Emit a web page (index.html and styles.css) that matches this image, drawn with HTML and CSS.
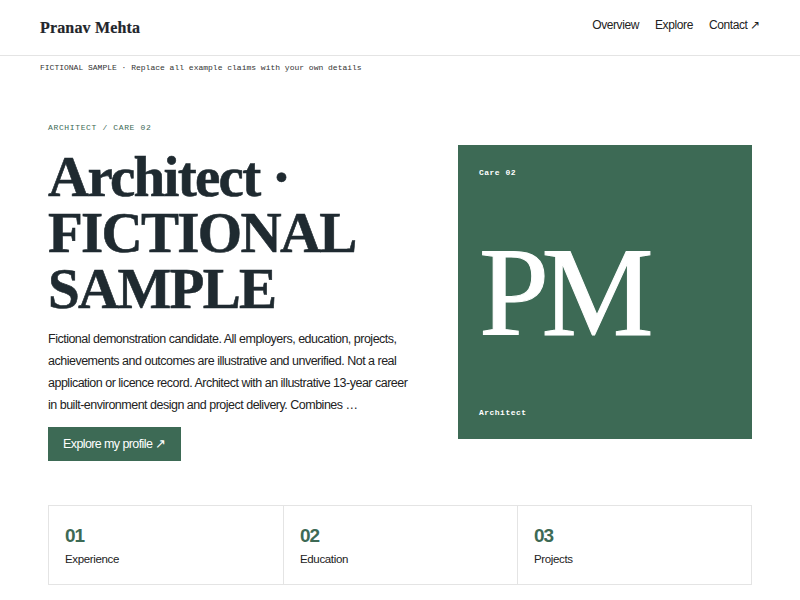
FILE: index.html
```html
<!DOCTYPE html>
<html lang="en">
<head>
<meta charset="utf-8">
<title>Pranav Mehta</title>
<link rel="stylesheet" href="styles.css">
</head>
<body>
<header class="site-header">
  <a class="logo" href="#">Pranav Mehta</a>
  <nav class="nav">
    <a href="#">Overview</a>
    <a href="#">Explore</a>
    <a href="#">Contact ↗</a>
  </nav>
</header>
<div class="notice">FICTIONAL SAMPLE · Replace all example claims with your own details</div>
<main class="container">
  <section class="hero">
    <div class="hero-text">
      <p class="eyebrow">ARCHITECT / CARE 02</p>
      <h1 class="title">Architect · FICTIONAL SAMPLE</h1>
      <p class="lead">Fictional demonstration candidate. All employers, education, projects, achievements and outcomes are illustrative and unverified. Not a real application or licence record. Architect with an illustrative 13-year career in built-environment design and project delivery. Combines …</p>
      <a class="button" href="#">Explore my profile ↗</a>
    </div>
    <div class="monogram">
      <span class="mono-label">Care 02</span>
      <span class="initials">PM</span>
      <span class="mono-label">Architect</span>
    </div>
  </section>
  <section class="cards">
    <div class="card"><span class="num">01</span><span class="label">Experience</span></div>
    <div class="card"><span class="num">02</span><span class="label">Education</span></div>
    <div class="card"><span class="num">03</span><span class="label">Projects</span></div>
  </section>
</main>
</body>
</html>
```
FILE: styles.css
```css
* { box-sizing: border-box; }
html, body { margin: 0; padding: 0; background: #fff; }
body {
  font-family: "Liberation Sans", Arial, sans-serif;
  color: #1f262b;
}
a { color: inherit; text-decoration: none; }

.site-header {
  height: 56px;
  display: flex;
  align-items: center;
  justify-content: space-between;
  padding: 0 40px;
  border-bottom: 1px solid #e4e4e4;
}
.logo {
  font-family: "Liberation Serif", "Times New Roman", serif;
  font-weight: 700;
  font-size: 16px;
  letter-spacing: 0.01em;
  color: #1f262b;
  -webkit-text-stroke: 0.2px #1f262b;
}
.nav {
  display: flex;
  gap: 16px;
  font-size: 12px;
  letter-spacing: -0.4px;
  color: #222;
  padding-bottom: 5px;
}

.notice {
  padding: 6px 40px;
  font-family: "Liberation Mono", "DejaVu Sans Mono", monospace;
  font-size: 8px;
  line-height: 12px;
  color: #333;
}

.container { width: 704px; margin: 0 auto; }

.hero {
  display: grid;
  grid-template-columns: 1fr 294px;
  column-gap: 44px;
  align-items: center;
  padding-top: 42px;
}
.eyebrow {
  margin: 0 0 15px;
  font-family: "Liberation Mono", "DejaVu Sans Mono", monospace;
  font-size: 8px;
  line-height: 12px;
  letter-spacing: 0.08em;
  color: #3d6a55;
}
.title {
  margin: 0;
  font-family: "Liberation Serif", "Times New Roman", serif;
  font-weight: 700;
  font-size: 57px;
  line-height: 56px;
  letter-spacing: -0.03em;
  color: #1f2a30;
  -webkit-text-stroke: 0.6px #1f2a30;
}
.lead {
  margin: 11px 0 0;
  max-width: 362px;
  font-size: 12.5px;
  letter-spacing: -0.5px;
  line-height: 22px;
  color: #222;
}
.button {
  display: inline-block;
  margin-top: 11px;
  background: #3d6a55;
  color: #fff;
  font-size: 12.5px;
  letter-spacing: -0.6px;
  line-height: 34px;
  padding: 0 15px;
}

.monogram {
  width: 294px;
  height: 294px;
  background: #3d6a55;
  color: #fff;
  padding: 22px 21px 20px;
  display: flex;
  flex-direction: column;
  justify-content: space-between;
}
.mono-label {
  font-family: "Liberation Mono", "DejaVu Sans Mono", monospace;
  font-weight: 700;
  font-size: 8px;
  line-height: 12px;
  letter-spacing: 0.06em;
}
.initials {
  font-family: "Liberation Serif", "Times New Roman", serif;
  font-size: 126px;
  line-height: 1;
  letter-spacing: -0.06em;
  -webkit-text-stroke: 1px #fff;
}

.cards {
  display: grid;
  grid-template-columns: repeat(3, 1fr);
  margin-top: 44px;
  border: 1px solid #e4e4e4;
}
.card {
  display: flex;
  flex-direction: column;
  padding: 18px 16px 16px;
  border-left: 1px solid #e4e4e4;
  height: 78px;
}
.card:first-child { border-left: 0; }
.num { font-weight: 700; font-size: 19px; line-height: 24px; letter-spacing: -1px; color: #3d6a55; }
.label { font-size: 11.5px; letter-spacing: -0.35px; line-height: 18px; color: #222; margin-top: 2px; }
```
